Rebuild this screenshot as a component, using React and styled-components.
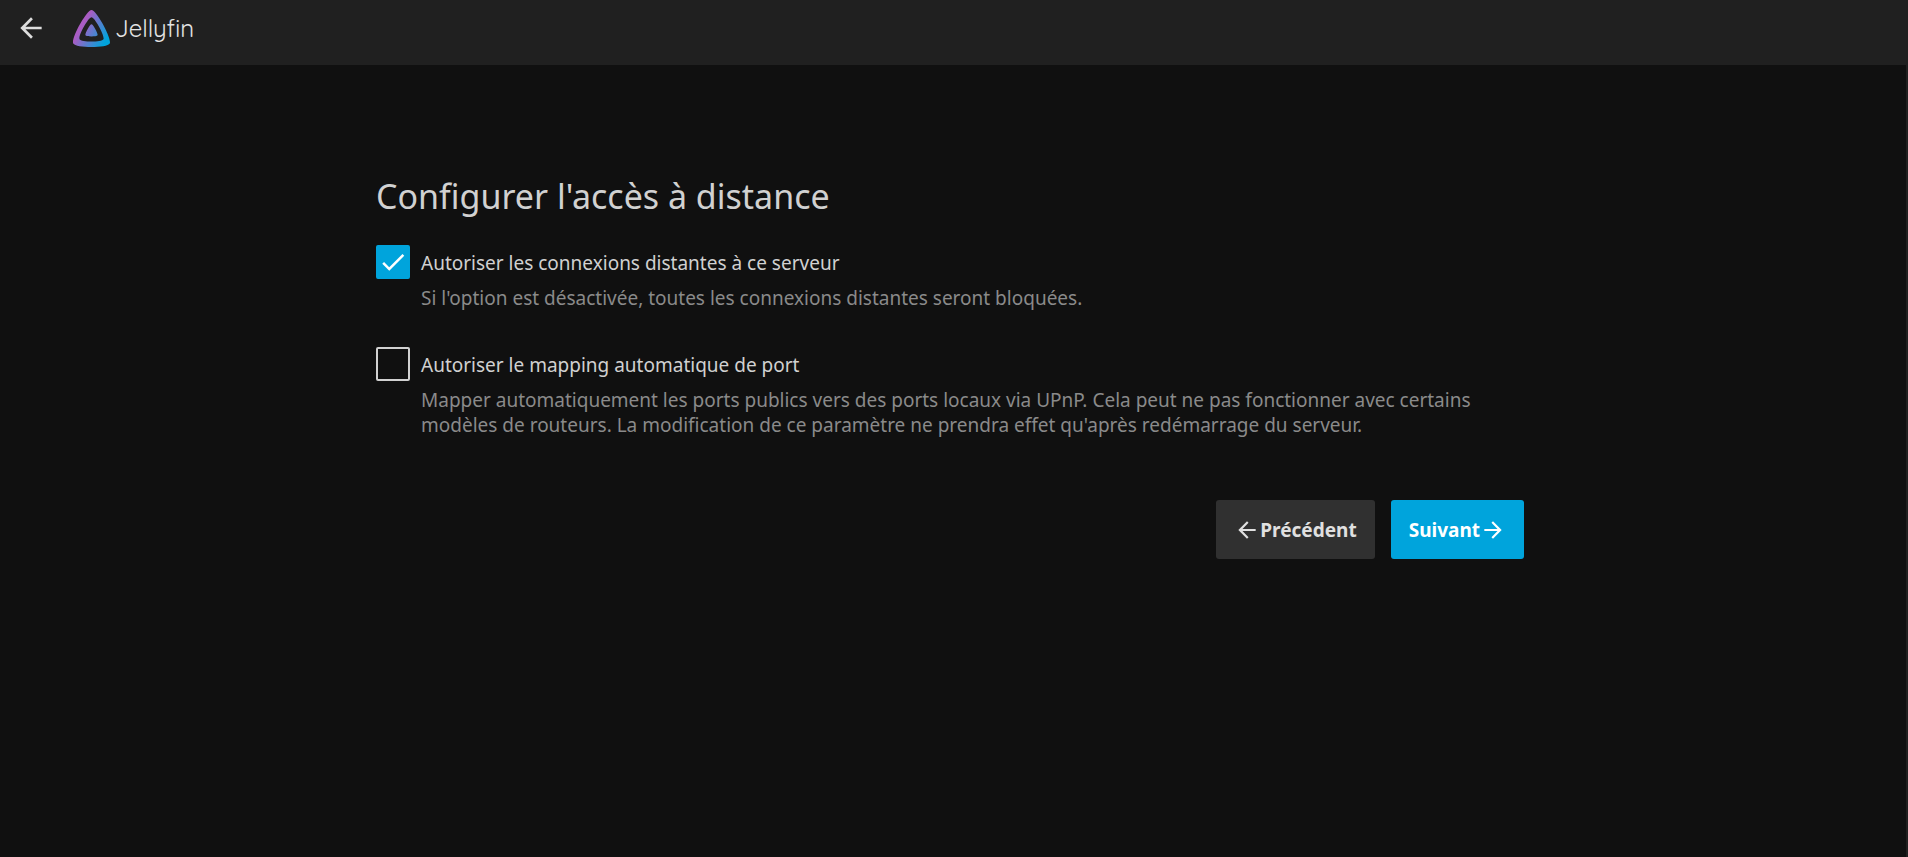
import React, { useState } from "react";
import styled, { createGlobalStyle } from "styled-components";
import { MdArrowBack, MdArrowForward, MdCheck } from "react-icons/md";

const GlobalStyle = createGlobalStyle`
  * {
    box-sizing: border-box;
  }

  body {
    margin: 0;
    background-color: #101010;
    color: #d1d1d1;
    font-family: "Noto Sans", sans-serif;
    font-size: 19px;
  }
`;

const Page = styled.div`
  display: flex;
  flex-direction: column;
  min-height: 100vh;
`;

const Header = styled.header`
  display: flex;
  align-items: flex-start;
  height: 65px;
  padding: 7px 10px;
  background-color: #202020;
`;

const BackButton = styled.button`
  display: flex;
  padding: 5px;
  border: 0;
  background: none;
  color: #dddddd;
  font-size: 32px;
  cursor: pointer;
`;

const LogoLink = styled.a`
  display: flex;
  align-items: center;
  gap: 5px;
  height: 42px;
  margin-left: 21px;
  color: #e4e4e4;
  font-family: Quicksand, Lato, sans-serif;
  font-size: 24px;
  font-weight: 400;
  text-decoration: none;
`;

const Main = styled.main`
  display: flex;
  border-right: 2px solid #202020;
  flex: 1;
`;

const WizardForm = styled.form`
  width: 1148px;
  max-width: 90%;
  margin: 0 auto;
  padding: 107px 6px 40px 0;
  box-sizing: content-box;
`;

const Title = styled.h1`
  margin: 0 0 25px;
  font-size: 34px;
  font-weight: 400;
  line-height: 48px;
`;

const Field = styled.div`
  margin-bottom: 36px;
`;

const FieldLabel = styled.label`
  display: flex;
  align-items: center;
  gap: 11px;
  height: 34px;
  cursor: pointer;
`;

const LabelText = styled.span`
  padding-top: 2px;
`;

const CheckBox = styled.span`
  display: grid;
  width: 34px;
  height: 34px;
  color: #ffffff;
  font-size: 30px;

  > * {
    grid-area: 1 / 1;
    place-self: center;
  }

  svg {
    pointer-events: none;
  }
`;

const CheckInput = styled.input`
  appearance: none;
  width: 34px;
  height: 34px;
  margin: 0;
  border: 2px solid #d1d1d1;
  border-radius: 2px;
  cursor: pointer;

  &:checked {
    border-color: #00a4dc;
    background-color: #00a4dc;
  }
`;

const Description = styled.p`
  margin: 7px 0 0;
  padding-left: 45px;
  color: #8a8a8a;
  line-height: 25px;
`;

const Actions = styled.div`
  display: flex;
  justify-content: flex-end;
  gap: 16px;
  margin-top: 62px;
`;

const Button = styled.button`
  display: flex;
  align-items: center;
  height: 59px;
  padding: 0 18px;
  border: 0;
  border-radius: 3px;
  background-color: ${(props) => (props.$primary ? "#00a4dc" : "#303030")};
  color: ${(props) => (props.$primary ? "#ffffff" : "#e0e0e0")};
  font-family: inherit;
  font-size: 19px;
  font-weight: 700;
  cursor: pointer;

  svg {
    font-size: 26px;
  }
`;

function JellyfinMark() {
  return (
    <svg width="37" height="37" viewBox="0 0 24 24" aria-hidden="true">
      <defs>
        <linearGradient id="mark" x1="6" y1="10.3" x2="21.5" y2="19.3" gradientUnits="userSpaceOnUse">
          <stop offset="0" stopColor="#aa5cc3" />
          <stop offset="1" stopColor="#00a4dc" />
        </linearGradient>
      </defs>
      <path
        fill="url(#mark)"
        d="M12 .002C8.826.002-1.398 18.537.16 21.666c1.56 3.129 22.14 3.094 23.682 0C25.384 18.573 15.177 0 12 0zm7.76 18.949c-1.008 2.028-14.493 2.05-15.514 0C3.224 16.9 9.92 4.755 12.003 4.755c2.081 0 8.77 12.166 7.759 14.196zM12 9.198c-1.054 0-4.446 6.15-3.93 7.189.518 1.04 7.348 1.027 7.86 0 .511-1.027-2.874-7.19-3.93-7.19z"
      />
    </svg>
  );
}

function CheckField({ id, label, description, defaultChecked = false }) {
  const [checked, setChecked] = useState(defaultChecked);

  return (
    <Field>
      <FieldLabel htmlFor={id}>
        <CheckBox>
          <CheckInput
            type="checkbox"
            id={id}
            checked={checked}
            aria-describedby={`${id}-description`}
            onChange={(e) => setChecked(e.target.checked)}
          />
          {checked && <MdCheck />}
        </CheckBox>
        <LabelText>{label}</LabelText>
      </FieldLabel>
      <Description id={`${id}-description`}>{description}</Description>
    </Field>
  );
}

function App() {
  return (
    <Page>
      <GlobalStyle />
      <Header>
        <BackButton type="button" aria-label="Retour">
          <MdArrowBack />
        </BackButton>
        <LogoLink href="#">
          <JellyfinMark />
          Jellyfin
        </LogoLink>
      </Header>
      <Main>
        <WizardForm onSubmit={(e) => e.preventDefault()}>
          <Title>Configurer l'accès à distance</Title>
          <CheckField
            id="remote-access"
            label="Autoriser les connexions distantes à ce serveur"
            description="Si l'option est désactivée, toutes les connexions distantes seront bloquées."
            defaultChecked
          />
          <CheckField
            id="port-mapping"
            label="Autoriser le mapping automatique de port"
            description="Mapper automatiquement les ports publics vers des ports locaux via UPnP. Cela peut ne pas fonctionner avec certains modèles de routeurs. La modification de ce paramètre ne prendra effet qu'après redémarrage du serveur."
          />
          <Actions>
            <Button type="button">
              <MdArrowBack />
              Précédent
            </Button>
            <Button type="submit" $primary>
              Suivant
              <MdArrowForward />
            </Button>
          </Actions>
        </WizardForm>
      </Main>
    </Page>
  );
}

export default App;
